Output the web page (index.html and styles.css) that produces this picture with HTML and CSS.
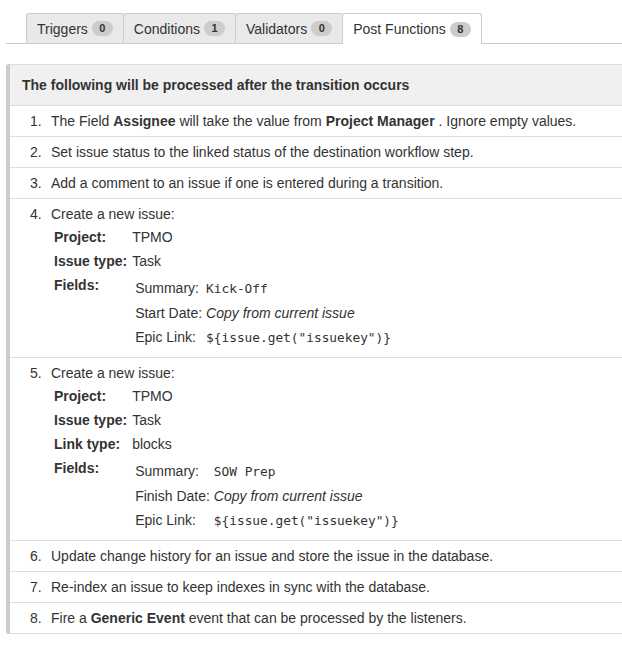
FILE: index.html
```html
<!DOCTYPE html>
<html lang="en">
<head>
    <meta charset="UTF-8">
    <title>Transition - Post Functions</title>
    <link rel="stylesheet" href="styles.css">
</head>
<body>
    <div class="tabs">
        <div class="tab">Triggers <span class="badge">0</span></div>
        <div class="tab">Conditions <span class="badge">1</span></div>
        <div class="tab">Validators <span class="badge">0</span></div>
        <div class="tab active">Post Functions <span class="badge">8</span></div>
    </div>

    <div class="panel">
        <div class="panel-header">The following will be processed after the transition occurs</div>
        <ol class="steps">
            <li class="step">
                <span class="num">1.</span>
                <div class="step-body">The Field <b>Assignee</b> will take the value from <b>Project Manager</b> . Ignore empty values.</div>
            </li>
            <li class="step">
                <span class="num">2.</span>
                <div class="step-body">Set issue status to the linked status of the destination workflow step.</div>
            </li>
            <li class="step">
                <span class="num">3.</span>
                <div class="step-body">Add a comment to an issue if one is entered during a transition.</div>
            </li>
            <li class="step">
                <span class="num">4.</span>
                <div class="step-body">
                    Create a new issue:
                    <div class="details">
                        <div class="label">Project:</div><div class="value">TPMO</div>
                        <div class="label">Issue type:</div><div class="value">Task</div>
                        <div class="label">Fields:</div>
                        <div class="fields">
                            <div class="fname">Summary:</div><div class="fval"><code>Kick-Off</code></div>
                            <div class="fname">Start Date:</div><div class="fval"><i>Copy from current issue</i></div>
                            <div class="fname">Epic Link:</div><div class="fval"><code>${issue.get("issuekey")}</code></div>
                        </div>
                    </div>
                </div>
            </li>
            <li class="step">
                <span class="num">5.</span>
                <div class="step-body">
                    Create a new issue:
                    <div class="details">
                        <div class="label">Project:</div><div class="value">TPMO</div>
                        <div class="label">Issue type:</div><div class="value">Task</div>
                        <div class="label">Link type:</div><div class="value">blocks</div>
                        <div class="label">Fields:</div>
                        <div class="fields">
                            <div class="fname">Summary:</div><div class="fval"><code>SOW Prep</code></div>
                            <div class="fname">Finish Date:</div><div class="fval"><i>Copy from current issue</i></div>
                            <div class="fname">Epic Link:</div><div class="fval"><code>${issue.get("issuekey")}</code></div>
                        </div>
                    </div>
                </div>
            </li>
            <li class="step">
                <span class="num">6.</span>
                <div class="step-body">Update change history for an issue and store the issue in the database.</div>
            </li>
            <li class="step">
                <span class="num">7.</span>
                <div class="step-body">Re-index an issue to keep indexes in sync with the database.</div>
            </li>
            <li class="step">
                <span class="num">8.</span>
                <div class="step-body">Fire a <b>Generic Event</b> event that can be processed by the listeners.</div>
            </li>
        </ol>
    </div>
</body>
</html>
```

FILE: styles.css
```css
body {
    margin: 0;
    background-color: #ffffff;
    font-family: "Liberation Sans", Arial, sans-serif;
    font-size: 14px;
    color: #333333;
}

/* tab strip */
.tabs {
    display: flex;
    margin: 13px 0 0 6px;
    padding-left: 20px;
    border-bottom: 1px solid #cccccc;
}
.tab {
    display: flex;
    align-items: center;
    height: 29px;
    padding: 0 10px;
    margin-bottom: -1px;
    margin-right: -1px;
    border: 1px solid #cccccc;
    border-bottom: 0;
    border-radius: 3px 3px 0 0;
    background-color: #e9e9e9;
    line-height: 20px;
}
.tab.active {
    background-color: #ffffff;
    height: 30px;
}
.badge {
    display: inline-block;
    margin-left: 4px;
    min-width: 21px;
    height: 15px;
    border-radius: 8px;
    background-color: #cccccc;
    color: #333333;
    font-size: 11px;
    font-weight: bold;
    line-height: 15px;
    text-align: center;
}

/* post function panel */
.panel {
    margin: 20px 0 0 6px;
    border-left: 4px solid #cccccc;
    border-radius: 3px 0 0 3px;
    box-shadow: 0 1px 1px rgba(0, 0, 0, 0.08);
}
.panel-header {
    height: 40px;
    padding-left: 12px;
    border-top: 1px solid #dddddd;
    border-bottom: 1px solid #dddddd;
    background-color: #f0f0f0;
    font-weight: bold;
    line-height: 40px;
}
.steps {
    list-style: none;
    margin: 0;
    padding: 0;
}
.step {
    display: flex;
    padding: 5px 0 5px 20px;
    border-bottom: 1px solid #dddddd;
    line-height: 20px;
}
.num {
    flex: 0 0 21px;
}
.step-body {
    flex: 1;
}

.details {
    display: grid;
    grid-template-columns: auto 1fr;
    margin: 1px 0 2px -18px;
}
.details .label {
    padding: 2px 5px 2px 21px;
    font-weight: bold;
}
.details .value {
    padding: 2px 0;
}
.fields {
    display: grid;
    grid-template-columns: auto 1fr;
    align-self: start;
    padding: 3px 3px 0;
}
.fname {
    padding: 2px 4px 2px 0;
}
.fval {
    padding: 2px 0;
}
code {
    font-family: "DejaVu Sans Mono", "Liberation Mono", monospace;
    font-size: 12.8px;
}
```
